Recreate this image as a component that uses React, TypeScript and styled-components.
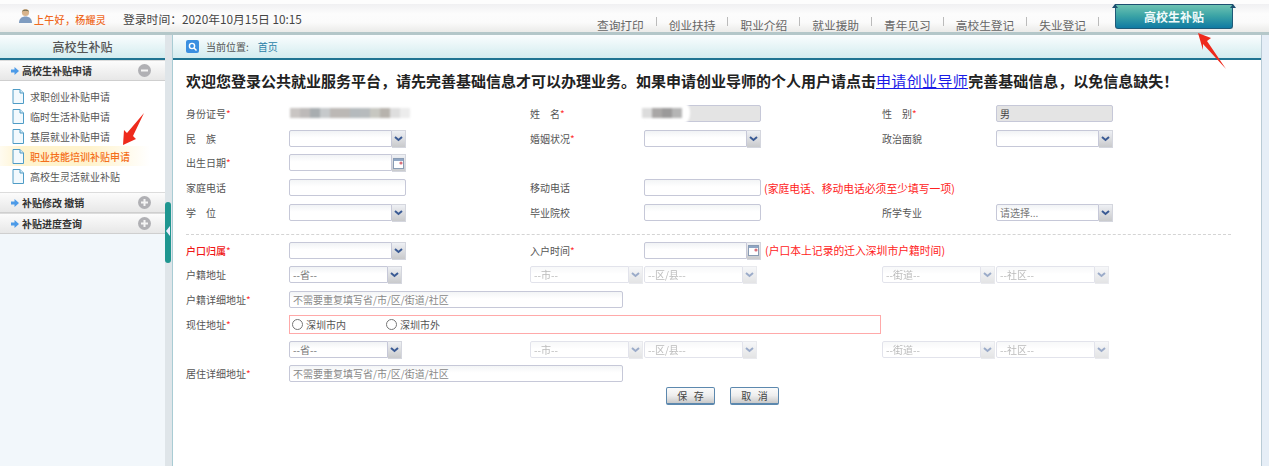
import { Fragment } from "react";
import styled, { createGlobalStyle } from "styled-components";

const GlobalStyle = createGlobalStyle`
  html, body {
    margin: 0;
    padding: 0;
    background: #fff;
    font-family: "Noto Sans CJK SC", "Liberation Sans", sans-serif;
    font-size: 10px;
    color: #444;
  }
  * { box-sizing: border-box; }
`;

const Page = styled.div`
  position: relative;
  width: 1269px;
  height: 466px;
  overflow: hidden;
  display: flex;
  flex-direction: column;
  padding-top: 4px;
  background: #fdfdfd;
`;

const Header = styled.header`
  height: 28px;
  display: flex;
  align-items: flex-start;
  padding: 0 36px 0 18px;
  background: linear-gradient(#f0f0f2, #fcfcfc 35%, #fbfbfb 65%, #ebebe9);
`;

const Avatar = styled.svg`
  width: 15px;
  height: 16px;
  margin: 4px 1px 0 0;
  flex: none;
`;

const Greeting = styled.span`
  margin-top: 9px;
  line-height: 14px;
  font-weight: 500;
  letter-spacing: 0.3px;
  color: #ef6a1f;
  width: 89px;
  flex: none;
`;

const LoginTime = styled.span`
  margin-top: 7px;
  line-height: 16px;
  font-size: 11.8px;
  color: #444;
`;

const Nav = styled.nav`
  margin-left: auto;
  display: flex;
  align-items: flex-start;
`;

const NavItem = styled.a`
  font-size: 11.7px;
  line-height: 16px;
  margin-top: 13px;
  color: #666;
  white-space: nowrap;
`;

const NavDivider = styled.i`
  width: 1px;
  height: 9px;
  margin: 13px 12px 0;
  background: #bbb;
`;

const ActiveTab = styled.a`
  position: relative;
  width: 118px;
  height: 25px;
  margin-left: 4px;
  display: flex;
  align-items: center;
  justify-content: center;
  font-size: 12px;
  font-weight: 700;
  color: #f2fbfb;
  background: linear-gradient(#6dc2b2, #3da5a6 45%, #0f7aa3);
  border: 1px solid #1f5a78;
  border-top-color: #1d4f70;
  border-radius: 0 0 3px 3px;

  &::before,
  &::after {
    content: "";
    position: absolute;
    top: -1px;
    border-bottom: 4px solid #1d4f70;
    border-left: 3px solid transparent;
    border-right: 3px solid transparent;
  }
  &::before { left: -4px; }
  &::after { right: -4px; }
`;

const HeaderBar = styled.div`
  height: 3px;
  background: #b4c7c9;
`;

const Main = styled.main`
  flex: 1;
  display: flex;
  min-height: 0;
`;

const Sidebar = styled.aside`
  width: 165px;
  flex: none;
  background: #f2f7fb;
`;

const PanelTitle = styled.div`
  height: 25px;
  display: flex;
  align-items: center;
  background: linear-gradient(#fafdfe, #d3ecef);
  border-bottom: 2px solid #1f7492;
`;

const SidebarTitle = styled(PanelTitle)`
  justify-content: center;
  font-size: 12px;
  font-weight: 500;
  color: #555;
`;

const GroupHead = styled.div`
  height: 21px;
  display: flex;
  align-items: center;
  padding: 0 14px 0 11px;
  gap: 3px;
  font-weight: 700;
  color: #333;
  background: linear-gradient(#fcfcfc, #e7e7e7);
  border-top: 1px solid #dcdcdc;
  border-bottom: 1px solid #cfcfcf;

  & > span { flex: 1; }
`;

const Menu = styled.ul`
  list-style: none;
  margin: 0;
  padding: 5px 0 6px;
  background: #fff;
`;

const MenuItem = styled.li<{ $active?: boolean }>`
  height: 20px;
  display: flex;
  align-items: center;
  gap: 6px;
  padding-left: 12px;
  margin-right: 15px;
  color: ${(p) => (p.$active ? "#f4701c" : "#555")};
  font-weight: ${(p) => (p.$active ? 500 : 400)};
  background: ${(p) =>
    p.$active
      ? "linear-gradient(90deg, rgba(255,243,205,.3), #fff3cd 15%, #fff3cd 60%, rgba(255,246,220,0))"
      : "none"};
`;

const Splitter = styled.div`
  position: relative;
  width: 7px;
  flex: none;
  background: #dfe5e9;
`;

const SplitterHandle = styled.div`
  position: absolute;
  left: 0;
  top: 167px;
  width: 6px;
  height: 61px;
  border-radius: 3px;
  background: #1f9690;

  &::after {
    content: "";
    position: absolute;
    top: 24px;
    left: 1px;
    border-right: 4px solid #eef;
    border-top: 5px solid transparent;
    border-bottom: 5px solid transparent;
  }
`;

const Content = styled.section`
  flex: 1;
  min-width: 0;
  background: #fff;
  border-left: 1px solid #a9ccd4;
`;

const Breadcrumb = styled(PanelTitle)`
  padding-left: 13px;
  gap: 7px;
  color: #555;

  & a { margin-left: 2px; color: #2b7fa8; }
`;

const RightRail = styled.div`
  width: 8px;
  flex: none;
  background: #e6eef7;
  border-left: 1px solid #b9cbd6;
`;

const Body = styled.div`
  padding: 11px 0 0 13px;
`;

const Notice = styled.h1`
  margin: 0 0 10px;
  font-size: 15px;
  line-height: 20px;
  font-weight: 700;
  color: #222;
  white-space: nowrap;

  & a {
    color: #1a1ae6;
    font-weight: 400;
    letter-spacing: 0.35px;
    text-decoration: underline;
  }
`;

const FormGrid = styled.div`
  width: 1045px;
  display: grid;
  grid-template-columns: 103px 241px 114px 238px 114px 235px;
  grid-auto-rows: 24.75px;
  align-items: center;
`;

const Label = styled.label<{ $alert?: boolean }>`
  white-space: nowrap;
  color: ${(p) => (p.$alert ? "#f01818" : "#555")};
  font-weight: ${(p) => (p.$alert ? 500 : 400)};

  & b { color: #f33; font-weight: 400; }
`;

const Cell = styled.div<{ $span?: number }>`
  position: relative;
  min-height: 17px;
  display: flex;
  align-items: center;
  grid-column: ${(p) => (p.$span ? `span ${p.$span}` : "auto")};
`;

const Input = styled.input<{ $width?: number; $gray?: boolean }>`
  width: ${(p) => p.$width ?? 117}px;
  height: 17px;
  padding: 0 3px;
  font: inherit;
  color: #444;
  border: 1px solid #c6c8d8;
  border-radius: 2px;
  background: ${(p) =>
    p.$gray ? "#e4e4e4" : "linear-gradient(#f3f5f6, #fff 45%)"};
  outline: none;

  &::placeholder { color: #888; opacity: 1; }
`;

const SelectBox = styled.div<{ $width: number; $disabled?: boolean }>`
  width: ${(p) => p.$width}px;
  height: 17px;
  display: flex;
  flex: none;
  opacity: ${(p) => (p.$disabled ? 0.5 : 1)};
  margin-right: 1px;
`;

const SelectValue = styled.div`
  flex: 1;
  min-width: 0;
  height: 17px;
  line-height: 15px;
  padding: 0 3px;
  color: #777;
  white-space: nowrap;
  border: 1px solid #c6c8d8;
  border-radius: 2px 0 0 2px;
  background: linear-gradient(#f1f3f5, #fff 45%);
`;

const ArrowButton = styled.div`
  width: 14px;
  height: 18px;
  flex: none;
  display: flex;
  align-items: center;
  justify-content: center;
  background: linear-gradient(#eef0f4, #c9cacc);
  border: 1px solid #d4d6de;
  border-left: none;
`;

const Hint = styled.span`
  margin-left: 3px;
  font-size: 10.8px;
  color: #f22;
  white-space: nowrap;
`;

const RadioBox = styled.div`
  width: 592px;
  height: 19px;
  display: flex;
  align-items: center;
  border: 1px solid #ffa9a9;
  padding-left: 2px;
`;

const RadioLabel = styled.label`
  width: 94px;
  display: flex;
  align-items: center;
  gap: 3px;
  color: #555;

  & input { width: 11px; height: 11px; margin: 0; }
`;

const Divider = styled.div`
  width: 1045px;
  margin: 9px 0 3px;
  border-top: 1px dashed #d4d4d4;
`;

const Actions = styled.div`
  display: flex;
  gap: 15px;
  padding: 1px 0 0 480px;
`;

const Button = styled.button`
  width: 49px;
  height: 18px;
  padding: 0;
  font: inherit;
  color: #444;
  white-space: pre;
  border: 1px solid #5c88ae;
  border-bottom-width: 2px;
  border-radius: 2px;
  background: linear-gradient(#fbfbfb, #eee 50%, #c9c9c9);
`;

const Mosaic = styled.div<{ $left: number; $cloud: number }>`
  position: absolute;
  left: ${(p) => p.$left}px;
  top: -5px;
  height: 26px;
  width: ${(p) => p.$cloud}px;
  display: flex;
  align-items: center;
  padding-left: 2px;
  background: #fff;
  border-radius: 12px;
  filter: blur(1px);
`;

const Tile = styled.i<{ $tone: string }>`
  width: 10px;
  height: 10px;
  background: ${(p) => p.$tone};
`;

const Annotation = styled.svg`
  position: absolute;
  inset: 0;
  width: 1269px;
  height: 466px;
  pointer-events: none;
`;

const navItems = ["查询打印", "创业扶持", "职业介绍", "就业援助", "青年见习", "高校生登记", "失业登记"];
const subsidyItems = ["求职创业补贴申请", "临时生活补贴申请", "基层就业补贴申请", "职业技能培训补贴申请", "高校生灵活就业补贴"];
const idTones = ["#c9c5c3", "#bdbab9", "#a8adb0", "#c6c9cb", "#bcb8b5", "#bbb8b5", "#b5babd", "#b7bbbd", "#c7c7c1", "#b7b3ad", "#dedede", "#ececec"];
const nameTones = ["#dcdcdc", "#a9a7a6", "#9b9a9a", "#b5b5b5"];

function DocIcon() {
  return (
    <svg width="12" height="15" viewBox="0 0 12 15">
      <path d="M1 .5h7l3.5 3.5v10.5H1z" fill="#f2f9fd" stroke="#4f9cc6" />
      <path d="M8 .5V4h3.5" fill="#d5e9f4" stroke="#4f9cc6" />
    </svg>
  );
}

function BlueArrow() {
  return (
    <svg width="8" height="8" viewBox="0 0 8 8">
      <path d="M0 2.5h3.5V0L8 4 3.500 8V5.500H0z" fill="#4d9be8" />
    </svg>
  );
}

function Toggle({ open }: { open?: boolean }) {
  return (
    <svg width="13" height="13" viewBox="0 0 13 13">
      <circle cx="6.5" cy="6.5" r="6.5" fill="#b0b0b4" />
      <rect x="3" y="5.5" width="7" height="2" fill="#f4f4f4" />
      {!open && <rect x="5.5" y="3" width="2" height="7" fill="#f4f4f4" />}
    </svg>
  );
}

function Chevron() {
  return (
    <svg width="9" height="6" viewBox="0 0 9 6">
      <path d="M1 1l3.5 3L8 1" fill="none" stroke="#3a5a94" strokeWidth="2" />
    </svg>
  );
}

function CalendarIcon() {
  return (
    <svg width="11" height="11" viewBox="0 0 11 11">
      <rect x=".5" y=".5" width="10" height="10" fill="#fff" stroke="#8a9cb4" />
      <rect x="1" y="1" width="9" height="2" fill="#8fa6c4" />
      <circle cx="8" cy="5" r="1.6" fill="#d8707a" />
    </svg>
  );
}

function Select({ width = 117, value = "", disabled }: { width?: number; value?: string; disabled?: boolean }) {
  return (
    <SelectBox $width={width} $disabled={disabled}>
      <SelectValue>{value}</SelectValue>
      <ArrowButton>
        <Chevron />
      </ArrowButton>
    </SelectBox>
  );
}

function DateField() {
  return (
    <SelectBox $width={117}>
      <SelectValue />
      <ArrowButton>
        <CalendarIcon />
      </ArrowButton>
    </SelectBox>
  );
}

function AddressRow({ label }: { label?: string }) {
  return (
    <>
      <Label>{label}</Label>
      <Cell>
        <Select width={113} value="--省--" />
      </Cell>
      <Cell $span={2}>
        <Select width={113} value="--市--" disabled />
        <Select width={113} value="--区/县--" disabled />
      </Cell>
      <Cell $span={2}>
        <Select width={113} value="--街道--" disabled />
        <Select width={113} value="--社区--" disabled />
      </Cell>
    </>
  );
}

export default function App() {
  return (
    <Page>
      <GlobalStyle />
      <Header>
        <Avatar viewBox="0 0 15 16">
          <circle cx="7.5" cy="4.5" r="3.6" fill="#d8b48c" />
          <path d="M4 3.5C4.5 1 10.5 1 11 3.5 9 2.6 6 2.6 4 3.5z" fill="#6b6a4e" />
          <path d="M1 15c0-4.500 3-6.500 6.500-6.500S14 10.500 14 15z" fill="#7f9cc0" />
        </Avatar>
        <Greeting>上午好，杨耀灵</Greeting>
        <LoginTime>登录时间：2020年10月15日 10:15</LoginTime>
        <Nav>
          {navItems.map((item) => (
            <Fragment key={item}>
              <NavItem>{item}</NavItem>
              <NavDivider />
            </Fragment>
          ))}
          <ActiveTab>高校生补贴</ActiveTab>
        </Nav>
      </Header>
      <HeaderBar />
      <Main>
        <Sidebar>
          <SidebarTitle>高校生补贴</SidebarTitle>
          <GroupHead>
            <BlueArrow />
            <span>高校生补贴申请</span>
            <Toggle open />
          </GroupHead>
          <Menu>
            {subsidyItems.map((item, i) => (
              <MenuItem key={item} $active={i === 3}>
                <DocIcon />
                {item}
              </MenuItem>
            ))}
          </Menu>
          <GroupHead>
            <BlueArrow />
            <span>补贴修改 撤销</span>
            <Toggle />
          </GroupHead>
          <GroupHead>
            <BlueArrow />
            <span>补贴进度查询</span>
            <Toggle />
          </GroupHead>
        </Sidebar>
        <Splitter>
          <SplitterHandle />
        </Splitter>
        <Content>
          <Breadcrumb>
            <svg width="13" height="13" viewBox="0 0 13 13">
              <rect width="13" height="13" rx="2" fill="#3b8fe0" />
              <circle cx="6" cy="6" r="2.6" fill="none" stroke="#fff" strokeWidth="1.4" />
              <path d="M8 8l2.500 2.500" stroke="#fff" strokeWidth="1.4" />
            </svg>
            当前位置:<a>首页</a>
          </Breadcrumb>
          <Body>
            <Notice>
              欢迎您登录公共就业服务平台，请先完善基础信息才可以办理业务。如果申请创业导师的个人用户请点击
              <a>申请创业导师</a>完善基础信息，以免信息缺失！
            </Notice>
            <FormGrid>
              <Label>身份证号<b>*</b></Label>
              <Cell>
                <Mosaic $left={-1} $cloud={124}>
                  {idTones.map((tone, i) => (
                    <Tile key={i} $tone={tone} />
                  ))}
                </Mosaic>
              </Cell>
              <Label>姓　名<b>*</b></Label>
              <Cell>
                <Input $gray readOnly />
                <Mosaic $left={-4} $cloud={50}>
                  {nameTones.map((tone, i) => (
                    <Tile key={i} $tone={tone} />
                  ))}
                </Mosaic>
              </Cell>
              <Label>性　别<b>*</b></Label>
              <Cell>
                <Input $gray readOnly value="男" />
              </Cell>

              <Label>民　族</Label>
              <Cell><Select /></Cell>
              <Label>婚姻状况<b>*</b></Label>
              <Cell><Select /></Cell>
              <Label>政治面貌</Label>
              <Cell><Select /></Cell>

              <Label>出生日期<b>*</b></Label>
              <Cell><DateField /></Cell>
              <Cell $span={4} />

              <Label>家庭电话</Label>
              <Cell><Input /></Cell>
              <Label>移动电话</Label>
              <Cell $span={3}>
                <Input />
                <Hint>(家庭电话、移动电话必须至少填写一项)</Hint>
              </Cell>

              <Label>学　位</Label>
              <Cell><Select /></Cell>
              <Label>毕业院校</Label>
              <Cell><Input /></Cell>
              <Label>所学专业</Label>
              <Cell><Select value="请选择..." /></Cell>
            </FormGrid>
            <Divider />
            <FormGrid>
              <Label $alert>户口归属<b>*</b></Label>
              <Cell><Select /></Cell>
              <Label>入户时间<b>*</b></Label>
              <Cell $span={3}>
                <DateField />
                <Hint>(户口本上记录的迁入深圳市户籍时间)</Hint>
              </Cell>

              <AddressRow label="户籍地址" />

              <Label>户籍详细地址<b>*</b></Label>
              <Cell $span={5}>
                <Input $width={334} placeholder="不需要重复填写省/市/区/街道/社区" />
              </Cell>

              <Label>现住地址<b>*</b></Label>
              <Cell $span={5}>
                <RadioBox>
                  <RadioLabel><input type="radio" name="live" />深圳市内</RadioLabel>
                  <RadioLabel><input type="radio" name="live" />深圳市外</RadioLabel>
                </RadioBox>
              </Cell>

              <AddressRow />

              <Label>居住详细地址<b>*</b></Label>
              <Cell $span={5}>
                <Input $width={334} placeholder="不需要重复填写省/市/区/街道/社区" />
              </Cell>
            </FormGrid>
            <Actions>
              <Button>保   存</Button>
              <Button>取   消</Button>
            </Actions>
          </Body>
        </Content>
        <RightRail />
      </Main>
      <Annotation viewBox="0 0 1269 466">
        <polygon points="1198,33 1211,38 1207,41 1226,69 1203,44 1203,50" fill="#ee2a1c" />
        <polygon points="123,145 124,130 127,133 144,113 133,136 136,139" fill="#ee2a1c" />
      </Annotation>
    </Page>
  );
}
